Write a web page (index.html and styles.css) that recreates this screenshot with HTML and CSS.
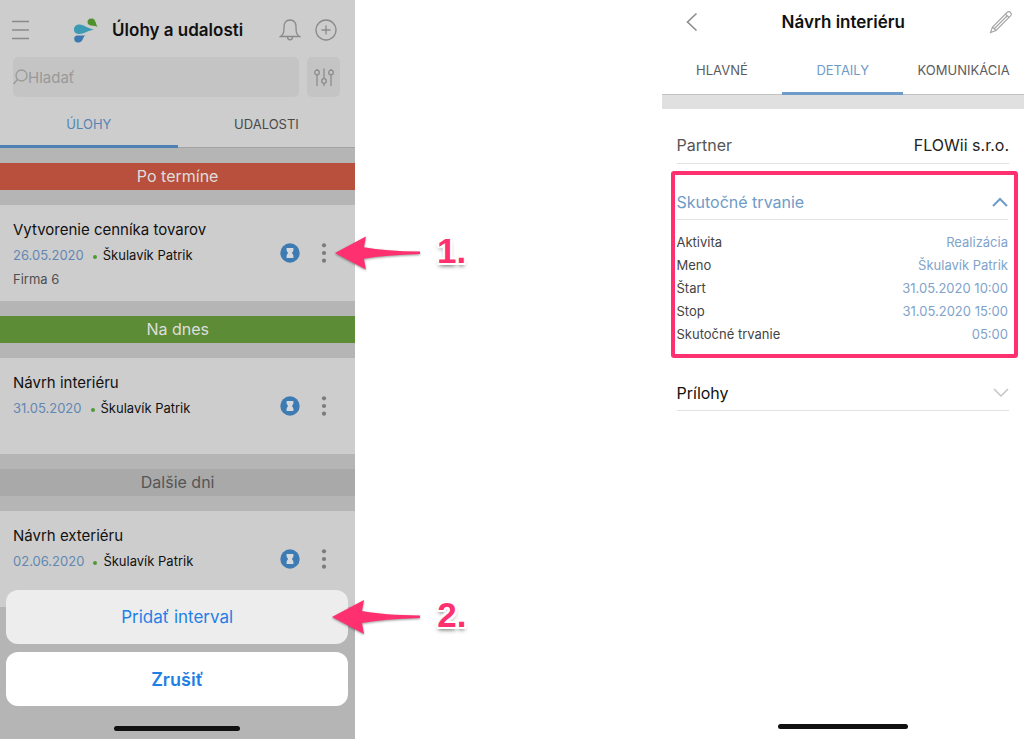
FILE: index.html
```html
<!DOCTYPE html>
<html lang="sk">
<head>
  <meta charset="UTF-8">
  <meta name="viewport" content="width=device-width, initial-scale=1.0">
  <title>Úlohy a udalosti</title>
  <link rel="stylesheet" href="styles.css">
</head>
<body>

  <svg width="0" height="0" class="sprite" aria-hidden="true">
    <symbol id="timer" viewBox="0 0 20 20">
      <circle cx="10" cy="10" r="9.7" fill="#3f7bb3"/>
      <path d="M6.600 5h6.800v2.200c0 1.300-1.300 1.800-1.300 2.800s1.300 1.500 1.300 2.800V15H6.600v-2.200c0-1.300 1.300-1.800 1.300-2.800S6.600 8.500 6.600 7.200z" fill="#d5d9dd"/>
    </symbol>
    <symbol id="dots" viewBox="0 0 20 20">
      <g fill="#7b7b7b"><circle cx="10" cy="2.300" r="2.100"/><circle cx="10" cy="10" r="2.100"/><circle cx="10" cy="17.700" r="2.100"/></g>
    </symbol>
    <symbol id="arrow" viewBox="0 0 90 36">
      <path d="M1 18 33 1l-2 11q22 4 58 4.500v2.500q-36 1-58 5l2 11z" fill="#ff3070"/>
    </symbol>
  </svg>

  <!-- Task list with action sheet -->
  <main class="phone tasks">
    <header class="tasks-header">
      <button class="icon-btn" aria-label="Menu">
        <svg width="20" height="20" viewBox="0 0 20 20" fill="none" stroke="#8a8a8a" stroke-width="1.500"><path d="M1 1.500h17M1 10h17M1 18.500h17"/></svg>
      </button>
      <div class="brand">
        <svg width="25" height="25" viewBox="0 0 25 25">
          <path d="M1 11.500C1 8 3.500 6.500 6.500 6.500c4.500 0 8 4 14.500 5-6 1-10 4.500-14.500 4.500C3.500 16 1 15 1 11.500z" fill="#3d9ab5"/>
          <path d="M14.500 4c0-2.500 2-3.800 4.300-3.500 4.200.5 3.700 5 5.700 8.500-3-1.700-6.500-.7-8.500-2.200-1-.8-1.500-1.600-1.500-2.800z" fill="#4f912b"/>
          <path d="M12.500 17c-3 2-2 6.500-6.500 7.500-3 .5-5-1.500-4.800-4C1.500 15.500 8 18.500 12.500 17z" fill="#3b79b0"/>
        </svg>
        <h1>Úlohy a udalosti</h1>
      </div>
      <button class="icon-btn" aria-label="Upozornenia">
        <svg width="22" height="22" viewBox="0 0 22 22" fill="none" stroke="#8a8a8a" stroke-width="1.300"><path d="M1.500 17.500c3-2 3.500-4 3.500-9.500 0-4 2-7 6-7s6 3 6 7c0 5.500.5 7.500 3.500 9.500zM8.500 17.800c0 4 5 4 5 0"/></svg>
      </button>
      <button class="icon-btn" aria-label="Pridať">
        <svg width="22" height="22" viewBox="0 0 22 22" fill="none" stroke="#8a8a8a" stroke-width="1.300"><circle cx="11" cy="11" r="10"/><path d="M11 6.500v9M6.500 11h9"/></svg>
      </button>
    </header>

    <div class="search-row">
      <label class="search">
        <svg width="15" height="16" viewBox="0 0 15 16" fill="none" stroke="#999" stroke-width="1.300"><circle cx="8.500" cy="6.500" r="5.500"/><path d="M4.500 10.500.5 15"/></svg>
        <input type="text" placeholder="Hladať" aria-label="Hladať">
      </label>
      <button class="filter" aria-label="Filter">
        <svg width="20" height="19" viewBox="0 0 20 19" fill="none" stroke="#8c8c8c" stroke-width="1.300"><path d="M3 1v1M3 7v11M10 .5v10M10 15.500V18M17 1v1M17 7v11"/><circle cx="3" cy="4.500" r="2.300"/><circle cx="10" cy="13" r="2.300"/><circle cx="17" cy="4.500" r="2.300"/></svg>
      </button>
    </div>

    <nav class="tabs">
      <button class="tab active">ÚLOHY</button>
      <button class="tab">UDALOSTI</button>
    </nav>

    <section class="group">
      <h2 class="band overdue">Po termíne</h2>
      <article class="task">
        <div class="task-text">
          <h3>Vytvorenie cenníka tovarov</h3>
          <p><span class="date">26.05.2020</span><span class="dot"></span>Škulavík Patrik</p>
          <p class="company">Firma 6</p>
        </div>
        <button class="icon-btn" aria-label="Časovač"><svg width="20" height="20"><use href="#timer"/></svg></button>
        <button class="icon-btn" aria-label="Viac"><svg width="20" height="20"><use href="#dots"/></svg></button>
        <div class="note"><svg width="87" height="36"><use href="#arrow"/></svg><b>1.</b></div>
      </article>
    </section>

    <section class="group">
      <h2 class="band today">Na dnes</h2>
      <article class="task">
        <div class="task-text">
          <h3>Návrh interiéru</h3>
          <p><span class="date">31.05.2020</span><span class="dot"></span>Škulavík Patrik</p>
        </div>
        <button class="icon-btn" aria-label="Časovač"><svg width="20" height="20"><use href="#timer"/></svg></button>
        <button class="icon-btn" aria-label="Viac"><svg width="20" height="20"><use href="#dots"/></svg></button>
      </article>
    </section>

    <section class="group">
      <h2 class="band later">Dalšie dni</h2>
      <article class="task">
        <div class="task-text">
          <h3>Návrh exteriéru</h3>
          <p><span class="date">02.06.2020</span><span class="dot"></span>Škulavík Patrik</p>
        </div>
        <button class="icon-btn" aria-label="Časovač"><svg width="20" height="20"><use href="#timer"/></svg></button>
        <button class="icon-btn" aria-label="Viac"><svg width="20" height="20"><use href="#dots"/></svg></button>
      </article>
    </section>

    <div class="sheet">
      <div class="sheet-item">
        <button class="sheet-btn">Pridať interval</button>
        <div class="note"><svg width="90" height="36"><use href="#arrow"/></svg><b>2.</b></div>
      </div>
      <button class="sheet-btn cancel">Zrušiť</button>
      <div class="home-bar"></div>
    </div>
  </main>

  <!-- Task detail -->
  <aside class="phone detail">
    <header class="detail-header">
      <button class="icon-btn" aria-label="Späť">
        <svg width="12" height="20" viewBox="0 0 12 20" fill="none" stroke="#8c8c8c" stroke-width="1.600"><path d="M10.500 1.500 1.500 10l9 8.500"/></svg>
      </button>
      <h1>Návrh interiéru</h1>
      <button class="icon-btn" aria-label="Upraviť">
        <svg width="24" height="24" viewBox="0 0 24 24" fill="none" stroke="#a3a3a3" stroke-width="1.100"><path d="M1.500 22.500 3.500 17 18.500 2q1.500-1 3 .5t.5 3L7 20.500zM3.500 17 7 20.500M16.500 4 20 7.500M5.500 18.500 18 6"/></svg>
      </button>
    </header>

    <nav class="tabs">
      <button class="tab">HLAVNÉ</button>
      <button class="tab active">DETAILY</button>
      <button class="tab">KOMUNIKÁCIA</button>
    </nav>
    <div class="divider"></div>

    <div class="row partner"><span>Partner</span><strong>FLOWii s.r.o.</strong></div>

    <section class="highlight">
      <button class="row open">Skutočné trvanie
        <svg width="16" height="10" viewBox="0 0 16 10" fill="none" stroke="#6f9bc8" stroke-width="2"><path d="M1 9l7-7 7 7"/></svg>
      </button>
      <dl>
        <div><dt>Aktivita</dt><dd>Realizácia</dd></div>
        <div><dt>Meno</dt><dd>Škulavík Patrik</dd></div>
        <div><dt>Štart</dt><dd>31.05.2020 10:00</dd></div>
        <div><dt>Stop</dt><dd>31.05.2020 15:00</dd></div>
        <div><dt>Skutočné trvanie</dt><dd>05:00</dd></div>
      </dl>
    </section>

    <button class="row files">Prílohy
      <svg width="16" height="10" viewBox="0 0 16 10" fill="none" stroke="#c4c4c4" stroke-width="1.500"><path d="M1 1l7 7 7-7"/></svg>
    </button>

    <div class="home-bar"></div>
  </aside>

</body>
</html>
```
FILE: styles.css
```css
* {
  box-sizing: border-box;
}
body {
  display: flex;
  justify-content: space-between;
  min-height: 100vh;
  margin: 0;
  background-color: #fff;
  font-family: Inter, "Liberation Sans", sans-serif;
  color: #111;
}
h1, h2, h3, p, dl, dd {
  margin: 0;
  font-weight: 400;
}
button {
  padding: 0;
  border: none;
  background: none;
  font-family: inherit;
  color: inherit;
  cursor: pointer;
}
svg {
  display: block;
  flex: none;
}
.sprite {
  position: absolute;
}
.phone {
  position: relative;
  display: flex;
  flex-direction: column;
}
.tasks {
  width: 34.7%;
  background-color: #b5b5b5;
}
.detail {
  width: 35.4%;
}
h1 {
  font-size: 17px;
  font-weight: 600;
  line-height: 24px;
}

/* Header and search */
.tasks-header {
  display: flex;
  align-items: center;
  gap: 14px;
  height: 57px;
  padding: 17px 18px 14px 11px;
  background-color: #cdcdcd;
}
.brand {
  display: flex;
  flex: 1;
  align-items: center;
  justify-content: center;
  gap: 14px;
  padding-left: 6px;
}
.search-row {
  display: flex;
  gap: 8px;
  padding: 0 15px 2px 13px;
  background-color: #cdcdcd;
}
.search {
  display: flex;
  flex: 1;
  align-items: center;
  height: 40px;
  border-radius: 5px;
  background-color: #c4c4c4;
}
.search input {
  flex: 1;
  min-width: 0;
  padding: 0;
  border: none;
  outline: none;
  background: none;
  font: 15px Inter, sans-serif;
}
.search input::placeholder {
  color: #999;
}
.filter {
  display: flex;
  align-items: center;
  justify-content: center;
  width: 33px;
  border-radius: 5px;
  background-color: #c4c4c4;
}

/* Tabs */
.tabs {
  display: flex;
  border-bottom: 1px solid #a3a3a3;
  background-color: #cdcdcd;
}
.tab {
  flex: 1 1 0;
  height: 49px;
  margin-bottom: -1px;
  padding-top: 3px;
  border-bottom: 3px solid transparent;
  font-size: 13px;
  color: #4a4a4a;
}
.tab.active {
  border-bottom-color: #4e80b3;
  color: #5585b5;
}

/* Task groups */
.band {
  margin: 15px 0;
  font-size: 16px;
  line-height: 27px;
  text-align: center;
  color: #dedede;
}
.overdue {
  background-color: #b9503d;
}
.today {
  background-color: #5d8c37;
}
.later {
  background-color: #a9a9a9;
  color: #555;
}
.task {
  position: relative;
  display: flex;
  align-items: center;
  gap: 14px;
  height: 96px;
  padding: 0 21px 0 13px;
  background-color: #cdcdcd;
}
.task-text {
  display: flex;
  flex: 1;
  flex-direction: column;
  align-self: flex-start;
  gap: 4px;
  padding-top: 14px;
}
.task h3 {
  font-size: 15px;
  line-height: 22px;
}
.task p {
  display: flex;
  align-items: center;
  font-size: 13px;
  line-height: 20px;
}
.task .date {
  color: #6288b2;
}
.dot {
  width: 4px;
  height: 4px;
  margin: 3px 6px 0 9px;
  border-radius: 50%;
  background-color: #4f9a35;
}
.task .company {
  color: #4f4f4f;
}

/* Numbered arrows */
.note {
  position: absolute;
  top: 50%;
  left: 94%;
  display: flex;
  align-items: center;
  gap: 16px;
  transform: translateY(-50%);
  z-index: 2;
}
.note svg {
  filter: drop-shadow(0 1px 1px rgba(0, 0, 0, 0.4));
}
.note b {
  padding-bottom: 4px;
  font: bold 35px/36px "Liberation Sans", sans-serif;
  color: #ff3070;
  text-shadow: 2px 0 #fff, -2px 0 #fff, 0 2px #fff, 0 -2px #fff, 2px 2px #fff, -2px -2px #fff, 2px -2px #fff, -2px 2px #fff, 0 3px 4px rgba(0, 0, 0, 0.6);
}

/* Action sheet */
.sheet {
  position: absolute;
  right: 0;
  bottom: 0;
  left: 0;
  display: flex;
  flex-direction: column;
  gap: 8px;
  padding: 0 7px 8px 6px;
}
.sheet-item {
  position: relative;
}
.sheet-item .note {
  left: 95%;
}
.sheet-btn {
  display: block;
  width: 100%;
  height: 54px;
  border-radius: 12px;
  background-color: #ededed;
  font-size: 17px;
  color: #1f7fe5;
}
.cancel {
  background-color: #fff;
  font-size: 18px;
  font-weight: 600;
}
.home-bar {
  width: 36%;
  height: 5px;
  margin: auto auto 0;
  border-radius: 3px;
  background-color: #111;
}
.sheet .home-bar {
  width: 37%;
  margin-top: 12px;
}

/* Detail screen */
.detail-header {
  display: flex;
  align-items: center;
  justify-content: space-between;
  height: 44px;
  padding: 0 11px 0 24px;
}
.detail .tabs {
  border-color: #c2c2c2;
  background-color: #fff;
}
.detail .tab {
  height: 51px;
  color: #5c5c5c;
}
.detail .tab.active {
  border-color: #6f9bc8;
  color: #6f9bc8;
}
.divider {
  height: 14px;
  background-color: #e0e0e0;
}
.row {
  display: flex;
  align-items: center;
  justify-content: space-between;
  height: 36px;
  border-bottom: 1px solid #e3e3e3;
  font-size: 16px;
}
.partner {
  height: 38px;
  margin: 17px 15px 7px;
  color: #555;
}
.partner strong {
  font-weight: 400;
  color: #222;
}
.highlight {
  margin: 0 6px 0 9px;
  padding: 9px 6px 8px 2px;
  border: 4px solid #ff3070;
  border-radius: 3px;
}
.open {
  width: 100%;
  color: #6f9bc8;
}
dl {
  padding-top: 11px;
}
dl div {
  display: flex;
  justify-content: space-between;
  font-size: 13px;
  line-height: 23px;
  color: #444;
}
dd {
  color: #7fa3cb;
}
.files {
  margin: 17px 15px 0;
}
.detail .home-bar {
  margin-bottom: 10px;
}
```
